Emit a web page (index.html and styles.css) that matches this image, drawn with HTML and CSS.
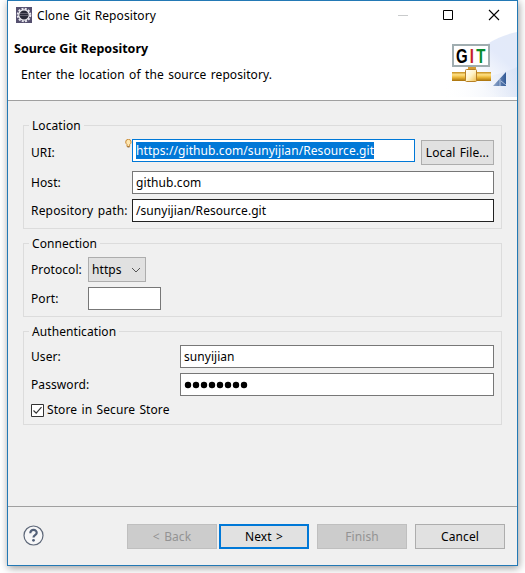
FILE: index.html
```html
<!DOCTYPE html>
<html lang="en">
<head>
<meta charset="utf-8">
<title>Clone Git Repository</title>
<link rel="stylesheet" href="styles.css">
</head>
<body>
<main class="window">
  <header class="banner">
    <div class="titlebar">
      <svg class="app-icon" width="16" height="16" viewBox="0 0 16 16">
        <rect width="16" height="16" fill="#55506f"/>
        <circle cx="8" cy="8" r="6.3" fill="none" stroke="#e9e8ef" stroke-width="2" stroke-dasharray="2 1.3"/>
        <circle cx="8" cy="8" r="5.2" fill="#292a38" stroke="#f2f1f5" stroke-width="1.2"/>
        <path d="M4 6.5h8M3.6 8.5h8.8" stroke="#62606e"/>
      </svg>
      <span class="window-title">Clone Git Repository</span>
      <svg class="controls" width="112" height="14" viewBox="0 0 112 14">
        <path d="M0 7.5h10" stroke="#c9cbcc"/>
        <path d="M45.500 2.500h9v9h-9z" fill="none" stroke="#000"/>
        <path d="M91 2l10 10M101 2L91 12" fill="none" stroke="#000" stroke-width="1.100"/>
      </svg>
    </div>
    <h1 class="heading">Source Git Repository</h1>
    <p class="description">Enter the location of the source repository.</p>
    <svg class="git-art" width="76" height="68" viewBox="0 0 76 68">
      <defs>
        <linearGradient id="sky" x1="0" y1="1" x2="1" y2="0"><stop offset=".35" stop-color="#fff"/><stop offset=".7" stop-color="#e3eafa"/><stop offset="1" stop-color="#e3eaf8"/></linearGradient>
        <linearGradient id="haze"><stop offset="0" stop-color="#fff" stop-opacity="0"/><stop offset="1" stop-color="#d6e0f4"/></linearGradient>
        <linearGradient id="pipe" x1="0" y1="0" x2="0" y2="1"><stop offset="0" stop-color="#c28b1c"/><stop offset=".3" stop-color="#ffe184"/><stop offset=".6" stop-color="#eab637"/><stop offset="1" stop-color="#a66f0b"/></linearGradient>
        <linearGradient id="joint" x1="0" y1="0" x2="1" y2="1"><stop offset="0" stop-color="#fff"/><stop offset=".5" stop-color="#fff3c8"/><stop offset="1" stop-color="#f0bf50"/></linearGradient>
        <linearGradient id="wedge"><stop offset="0" stop-color="#91a8cc"/><stop offset="1" stop-color="#315996"/></linearGradient>
      </defs>
      <path d="M76 2Q47 8 30 29L2 67H76z" fill="url(#sky)"/>
      <path d="M76 37Q42 52 4 49L0 67H76z" fill="url(#haze)" opacity=".65"/>
      <path d="M27 37h8v5h-8z" fill="#d59b31"/>
      <path d="M12 15h36v21H12z" fill="#fff" stroke="#a0adb0" stroke-width="2"/>
      <g transform="translate(15 33) scale(.75 1)"><text class="git-letters"><tspan x="0">G</tspan><tspan x="18.500" fill="#c51f2c">I</tspan><tspan x="27" fill="#078b2c">T</tspan></text></g>
      <path d="M11 42h39v9H11z" fill="url(#pipe)"/>
      <rect x="24.500" y="39.500" width="11" height="12" rx="1" fill="url(#joint)" stroke="#b88127"/>
      <path d="M52 56L65 42V56z" fill="url(#wedge)"/>
      <path d="M59 56V49M60 51l5 4" stroke="#d9e4f5" stroke-width=".7"/>
    </svg>
  </header>

  <div class="content">
    <section class="group location">
      <h2 class="legend">Location</h2>
      <div class="fields">
        <span class="label">URI:</span>
        <div class="uri-row">
          <div class="input focused"><span class="selection">https://github.com/sunyijian/Resource.git</span>
            <svg class="hint" width="7" height="9" viewBox="0 0 7 9"><path d="M2 5.500Q.7 4.500.7 3A2.600 2.600 0 0 1 6.100 3Q6.100 4.500 4.700 5.500V7.500H2z" fill="#ffe7b0" stroke="#c88a35"/><path d="M2.500 8h2" stroke="#866a48"/></svg>
          </div>
          <div class="button local">Local File...</div>
        </div>
        <span class="label">Host:</span>
        <div class="input host"><span>github.com</span></div>
        <span class="label repository">Repository path:</span>
        <div class="input path"><span>/sunyijian/Resource.git</span></div>
      </div>
    </section>
    <section class="group connection">
      <h2 class="legend">Connection</h2>
      <div class="fields">
        <span class="label">Protocol:</span>
        <div class="select"><span>https</span><svg width="10" height="6" viewBox="0 0 10 6"><path d="M1 1l4 4 4-4" fill="none" stroke="#555"/></svg></div>
        <span class="label">Port:</span>
        <div class="input port"></div>
      </div>
    </section>
    <section class="group authentication">
      <h2 class="legend">Authentication</h2>
      <div class="fields">
        <span class="label">User:</span>
        <div class="input"><span class="user">sunyijian</span></div>
        <span class="label">Password:</span>
        <div class="input"><svg width="64" height="8" viewBox="0 0 64 8"><path d="M4 4h.01M12 4h.01M20 4h.01M28 4h.01M36 4h.01M44 4h.01M52 4h.01M60 4h.01" stroke="#000" stroke-width="6.400" stroke-linecap="round"/></svg></div>
      </div>
      <div class="check">
        <svg width="13" height="13" viewBox="0 0 13 13"><path d="M.5.5h12v12H.5z" fill="#fff" stroke="#333"/><path d="M2.500 6.500l2.700 2.700 5.300-6" fill="none" stroke="#333" stroke-width="1.200"/></svg>
        <span>Store in Secure Store</span>
      </div>
    </section>
  </div>

  <footer class="footer">
    <svg class="help" width="21" height="21" viewBox="0 0 21 21"><circle cx="10.500" cy="10.500" r="9.500" fill="#f7f7f8" stroke="#5e6879" stroke-width="1.200"/><path d="M7.300 8.300C7.300 3.500 14 4.200 13.700 8c-.1 2.100-3.200 2.200-3.200 4.400" fill="none" stroke="#526078" stroke-width="2.200"/><circle cx="10.500" cy="15.300" r="1.400" fill="#526078"/></svg>
    <div class="button disabled back">&lt; Back</div>
    <div class="button primary">Next &gt;</div>
    <div class="button disabled finish">Finish</div>
    <div class="button cancel">Cancel</div>
  </footer>
</main>
</body>
</html>
```
FILE: styles.css
```css
* { box-sizing: border-box; }
body {
  margin: 0;
  height: 573px;
  overflow: hidden;
  background: #fff;
  color: #000;
  font: 12px/16px "Noto Sans", sans-serif;
  letter-spacing: .08px;
  word-spacing: 1.2px;
}
svg { display: block; flex: none; }
h1, h2, p { margin: 0; font-size: 12px; font-weight: 400; }
.window {
  display: flex;
  flex-direction: column;
  width: 511px;
  height: 566px;
  margin-left: 7px;
  border: 1px solid #2379b5;
  background: #f0f0f0;
  box-shadow: 1px 2px 8px rgba(0, 0, 0, .4);
}
.banner {
  position: relative;
  height: 100px;
  flex: none;
  background: #fff;
  border-bottom: 1px solid #a0a0a0;
}
.titlebar { display: flex; align-items: center; height: 28px; padding-left: 8px; }
.window-title { margin: 2px 0 0 5px; width: 361px; white-space: nowrap; }
.heading { margin: 12px 0 0 6px; font-size: 12.500px; font-weight: 700; letter-spacing: 0; word-spacing: 0; }
.description { margin: 10px 0 0 13px; }
.git-art { position: absolute; right: 0; bottom: 2px; }
.git-letters { font: 700 20px "Liberation Sans", sans-serif; letter-spacing: 0; word-spacing: 0; }
.content { flex: 1; padding: 24px 15px 0; }
.group { border: 1px solid #dcdcdc; padding-left: 7px; }
.location { height: 104px; }
.connection { height: 74px; margin-top: 14px; }
.authentication { height: 94px; margin-top: 14px; }
.legend { width: max-content; margin: -8px 0 0 -2px; padding: 0 3px; background: #f0f0f0; }
.fields { display: grid; align-items: center; row-gap: 5px; margin-top: 5px; white-space: nowrap; }
.location .fields { grid-template: 27px 23px 23px / 101px 362px; }
.connection .fields { grid-template: 25px 23px / 57px 73px; }
.authentication .fields { grid-template: 23px 23px / 149px 314px; }
.repository { letter-spacing: .18px; }
.uri-row { display: flex; align-items: flex-start; gap: 6px; height: 27px; }
.input { position: relative; display: flex; align-items: center; height: 23px; padding-left: 3px; background: #fff; border: 1px solid #777; }
.focused { width: 283px; border-color: #0078d7; }
.selection { height: 17px; line-height: 18px; background: #0078d7; color: #fff; }
.hint { position: absolute; left: -8px; top: -1px; }
.path { border-color: #222; }
.path, .user { letter-spacing: .05px; }
.button { display: flex; align-items: center; justify-content: center; width: 90px; height: 25px; border: 1px solid #adadad; background: #e1e1e1; white-space: nowrap; }
.local { width: 73px; margin-top: 1px; }
.select { display: flex; align-items: center; justify-content: space-between; width: 58px; height: 25px; padding: 0 4px 0 3px; background: #e1e1e1; border: 1px solid #adadad; }
.check { display: flex; align-items: center; gap: 3px; height: 16px; margin-top: 6px; }
.footer { display: flex; align-items: center; height: 59px; padding: 1px 12px 0 15px; border-top: 1px solid #a0a0a0; }
.help { margin-bottom: 3px; }
.back { margin-left: auto; }
.primary { margin: 0 8px 0 2px; border: 2px solid #0078d7; }
.cancel { margin-left: 8px; }
.disabled { background: #ccc; border-color: #bfbfbf; color: #939393; }
```
